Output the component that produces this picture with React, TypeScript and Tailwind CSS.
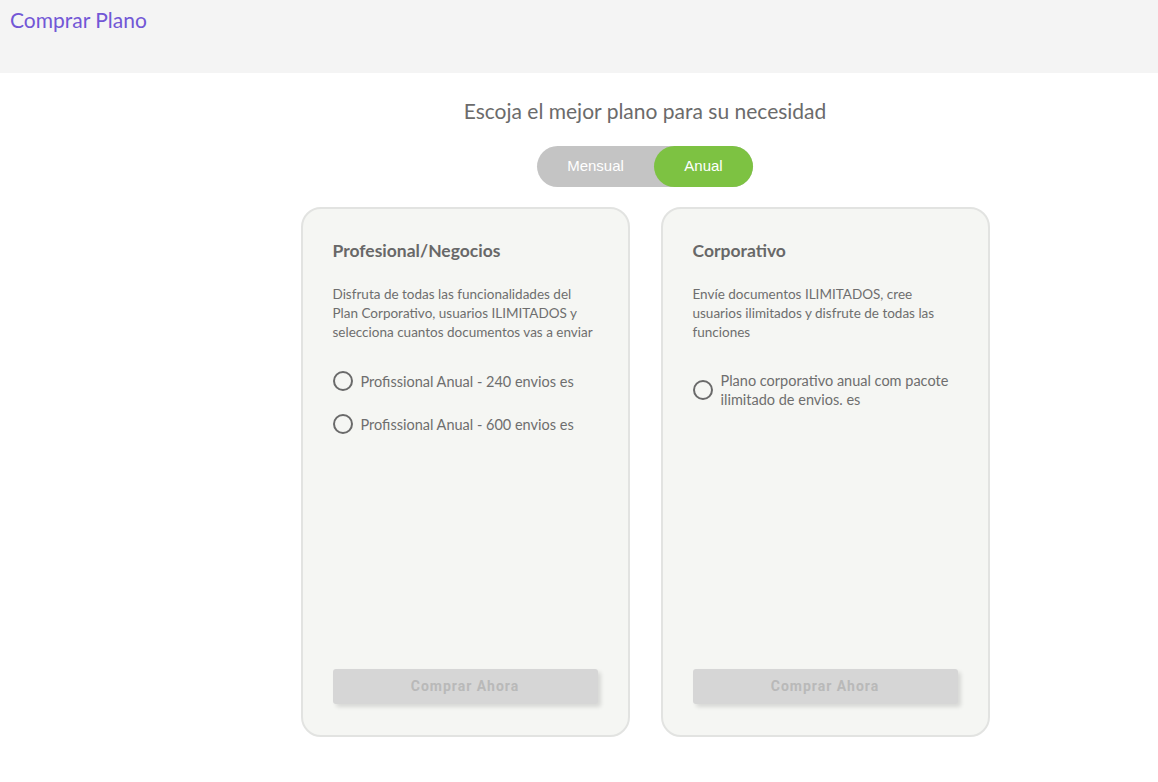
import React, { useState } from "react"

type Plan = {
  title: string
  description: string
  options: string[]
}

const plans: Plan[] = [
  {
    title: "Profesional/Negocios",
    description:
      "Disfruta de todas las funcionalidades del Plan Corporativo, usuarios ILIMITADOS y selecciona cuantos documentos vas a enviar",
    options: ["Profissional Anual - 240 envios es", "Profissional Anual - 600 envios es"],
  },
  {
    title: "Corporativo",
    description: "Envíe documentos ILIMITADOS, cree usuarios ilimitados y disfrute de todas las funciones",
    options: ["Plano corporativo anual com pacote ilimitado de envios. es"],
  },
]

function PlanCard({ plan }: { plan: Plan }) {
  return (
    <div className="w-[329px] h-[530px] rounded-[20px] border-2 border-[#e2e3e1] bg-[#f5f6f3] px-[30px] pt-[30px] pb-[31px] flex flex-col">
      <div className="text-[17.5px] leading-6 font-bold text-[#686868]">{plan.title}</div>
      <div className="mt-[22px] text-[13.5px] leading-[19px] text-[#6e6e6e]">{plan.description}</div>
      <div className="mt-[29px] flex flex-col gap-[23px]">
        {plan.options.map((o) => (
          <label key={o} className="flex items-center gap-2 cursor-pointer">
            <span className="shrink-0 w-[20px] h-[20px] rounded-full border-2 border-[#6a6a6a]" />
            <span className="text-[14.5px] leading-[19px] text-[#6e6e6e]">{o}</span>
          </label>
        ))}
      </div>
      <div className="mt-auto">
        <button
          disabled
          className="w-[265px] h-[35px] rounded-[3px] bg-[#d6d6d6] text-[#b9b9b9] text-[14px] font-bold tracking-[0.07em] shadow-[3px_3px_4px_rgba(0,0,0,0.12)]"
          style={{ fontFamily: "Roboto, sans-serif" }}
        >
          Comprar Ahora
        </button>
      </div>
    </div>
  )
}

export default function App() {
  const [annual, setAnnual] = useState(true)

  return (
    <div className="min-h-screen bg-white" style={{ fontFamily: 'Lato, "Noto Sans", sans-serif' }}>
      <div className="h-[73px] bg-[#f4f4f4] px-[10px] pt-[6px]">
        <div className="text-[21px] leading-7 text-[#7257d6]">Comprar Plano</div>
      </div>

      <div className="pl-[132px] flex flex-col items-center">
        <div className="mt-[24px] text-[21px] leading-7 text-[#6b6b6b]">Escoja el mejor plano para su necesidad</div>

        <div className="mt-[21px] flex w-[216px] h-[41px] rounded-full bg-[#c4c4c4] text-[15px] text-white" style={{ fontFamily: '"Liberation Sans", Arial, sans-serif' }}>
          <button
            onClick={() => setAnnual(false)}
            className={`flex-1 rounded-full ${annual ? "" : "bg-[#7dc242]"}`}
          >
            Mensual
          </button>
          <button
            onClick={() => setAnnual(true)}
            className={`w-[99px] rounded-full ${annual ? "bg-[#7dc242]" : ""}`}
          >
            Anual
          </button>
        </div>

        <div className="mt-[20px] flex gap-[31px]">
          {plans.map((p) => (
            <PlanCard key={p.title} plan={p} />
          ))}
        </div>
      </div>
    </div>
  )
}
